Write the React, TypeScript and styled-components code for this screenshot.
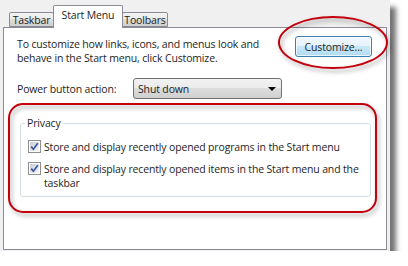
import React from "react";
import styled, { createGlobalStyle } from "styled-components";

const Global = createGlobalStyle`
  html, body { margin: 0; padding: 0; background: #ffffff; }
  body { font-family: "Open Sans", "Segoe UI", sans-serif; font-size: 10.5px; letter-spacing: -0.15px; color: #1e1e1e; }
`;

const Frame = styled.div`
  position: relative;
  width: 390px;
  height: 251px;
  background: #f0f0f0;
  box-shadow: 6px 7px 5px rgba(0, 0, 0, 0.55);
  padding: 0 3px;
  box-sizing: border-box;
  display: flex;
  flex-direction: column;
`;

const TabStrip = styled.div`
  height: 27px;
  display: flex;
  align-items: flex-end;
  padding-left: 6px;
`;

const Tab = styled.div<{ $active?: boolean; $w: number }>`
  box-sizing: border-box;
  width: ${(p) => p.$w}px;
  height: ${(p) => (p.$active ? 23 : 15)}px;
  margin: 0 ${(p) => (p.$active ? -1 : 0)}px ${(p) => (p.$active ? -1 : 0)}px;
  position: relative;
  z-index: ${(p) => (p.$active ? 2 : 1)};
  border: 1px solid #898c95;
  border-bottom: ${(p) => (p.$active ? "none" : "1px solid #898c95")};
  border-radius: 2px 2px 0 0;
  background: ${(p) =>
    p.$active
      ? "#ffffff"
      : "linear-gradient(#f3f3f3 0%, #ebebeb 50%, #dddddd 50%, #cfcfcf 100%)"};
  display: flex;
  justify-content: center;
  align-items: ${(p) => (p.$active ? "flex-start" : "center")};
  padding-top: ${(p) => (p.$active ? 3 : 1)}px;
  line-height: 13px;
  white-space: nowrap;
`;

const Panel = styled.div`
  flex: 1;
  background: #ffffff;
  border: 1px solid #898c95;
  margin-bottom: 1px;
  padding: 9px 13px 0 13px;
  display: flex;
  flex-direction: column;
`;

const TopRow = styled.div`
  display: flex;
  justify-content: space-between;
  align-items: flex-start;
`;

const Description = styled.p`
  margin: 0;
  line-height: 14px;
  white-space: nowrap;
`;

const Button = styled.button`
  box-sizing: border-box;
  margin: -1px 1px 0 0;
  width: 77px;
  height: 21px;
  border: 1px solid #3c7fb1;
  border-radius: 3px;
  background: linear-gradient(#f1f8fd 0%, #e3f2fb 50%, #c8e8f9 50%, #b2dbf3 100%);
  box-shadow: inset 0 0 0 1px rgba(255, 255, 255, 0.7);
  font-family: inherit;
  font-size: inherit;
  letter-spacing: inherit;
  color: #1e1e1e;
  padding: 0;
`;

const PowerRow = styled.div`
  display: flex;
  align-items: center;
  margin-top: 13px;
`;

const Label = styled.span`
  width: 116px;
`;

const Select = styled.div`
  box-sizing: border-box;
  width: 149px;
  height: 21px;
  border: 1px solid #707070;
  border-radius: 3px;
  background: linear-gradient(#f2f2f2 0%, #ebebeb 50%, #dddddd 50%, #cfcfcf 100%);
  display: flex;
  align-items: center;
  justify-content: space-between;
  padding: 0 5px 0 4px;
`;

const Arrow = styled.span`
  width: 0;
  height: 0;
  border-left: 4px solid transparent;
  border-right: 4px solid transparent;
  border-top: 4px solid #000;
`;

const Group = styled.fieldset`
  margin: 17px 0 0 3px;
  width: 351px;
  box-sizing: border-box;
  border: 1px solid #d5dfe5;
  border-radius: 3px;
  padding: 10px 7px 6px 7px;
  display: flex;
  flex-direction: column;
  gap: 8px;
`;

const Legend = styled.legend`
  padding: 0 2px;
  margin-left: -3px;
  line-height: 14px;
`;

const CheckRow = styled.label`
  display: flex;
  align-items: flex-start;
  gap: 3px;
  line-height: 14px;
  white-space: nowrap;
`;

const Box = styled.span`
  box-sizing: border-box;
  flex: none;
  width: 13px;
  height: 13px;
  border: 1px solid #8e8f8f;
  background: #fff;
  padding: 1px;
  display: flex;
`;

const BoxInner = styled.span`
  flex: 1;
  background: linear-gradient(135deg, #cbcfd5 0%, #e3e5e8 60%, #f4f4f5 100%);
  display: flex;
  align-items: center;
  justify-content: center;
`;

const Ellipse = styled.div`
  position: absolute;
  left: 278px;
  top: 16px;
  width: 110px;
  height: 53px;
  box-sizing: border-box;
  border: 2px solid #c3000c;
  border-radius: 50%;
  filter: drop-shadow(2px 3px 2px rgba(0, 0, 0, 0.35));
  pointer-events: none;
`;

const Highlight = styled.div`
  position: absolute;
  left: 8px;
  top: 103px;
  width: 369px;
  height: 110px;
  box-sizing: border-box;
  border: 2px solid #c3000c;
  border-radius: 15px;
  filter: drop-shadow(2px 3px 2px rgba(0, 0, 0, 0.35));
  pointer-events: none;
`;

function Check() {
  return (
    <Box>
      <BoxInner>
        <svg width="9" height="9" viewBox="0 0 9 9">
          <path d="M1.2 4.6 L3.4 7.2 L7.8 1.2" fill="none" stroke="#3d569e" strokeWidth="1.7" />
        </svg>
      </BoxInner>
    </Box>
  );
}

export default function App() {
  return (
    <>
      <Global />
      <Frame>
        <TabStrip>
          <Tab $w={45}>Taskbar</Tab>
          <Tab $w={70} $active>Start Menu</Tab>
          <Tab $w={46}>Toolbars</Tab>
        </TabStrip>
        <Panel>
          <TopRow>
            <Description>
              To customize how links, icons, and menus look and
              <br />
              behave in the Start menu, click Customize.
            </Description>
            <Button>Customize...</Button>
          </TopRow>
          <PowerRow>
            <Label>Power button action:</Label>
            <Select>
              <span>Shut down</span>
              <Arrow />
            </Select>
          </PowerRow>
          <Group>
            <Legend>Privacy</Legend>
            <CheckRow>
              <Check />
              <span>Store and display recently opened programs in the Start menu</span>
            </CheckRow>
            <CheckRow>
              <Check />
              <span>
                Store and display recently opened items in the Start menu and the
                <br />
                taskbar
              </span>
            </CheckRow>
          </Group>
        </Panel>
        <Ellipse />
        <Highlight />
      </Frame>
    </>
  );
}
